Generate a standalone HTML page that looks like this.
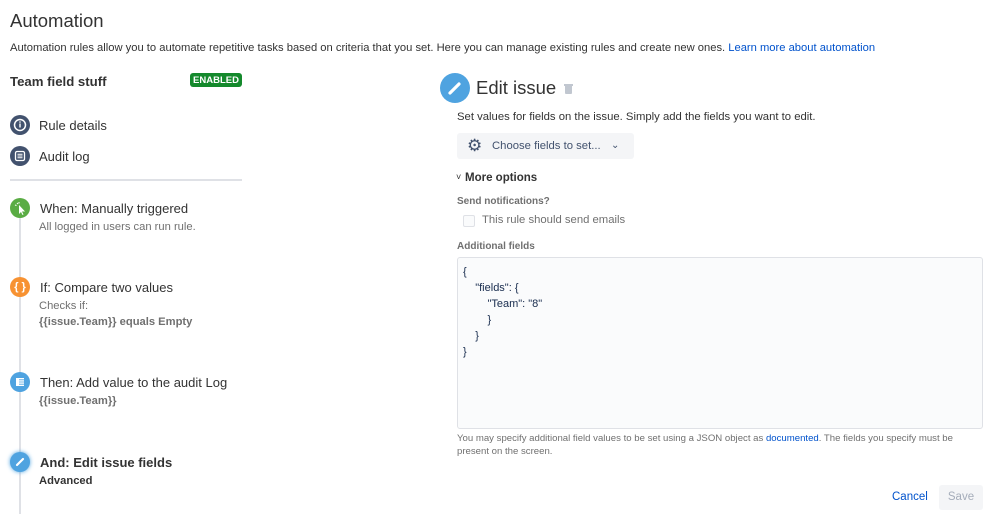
<!DOCTYPE html><html><head><style>
body{margin:0;width:998px;height:514px;overflow:hidden;background:#fff;font-family:"Liberation Sans",sans-serif;color:#333;position:relative}
div,span{position:absolute;white-space:nowrap}
.c{border-radius:50%;}
.t{font-size:13px;color:#333}
.s{font-size:11.2px;color:#707070}
.b{font-weight:bold}
</style></head><body>
<div style="left:10px;top:10px;font-size:18.5px;color:#333">Automation</div>
<div style="left:10px;top:42px;font-size:11.2px">Automation rules allow you to automate repetitive tasks based on criteria that you set. Here you can manage existing rules and create new ones. <span style="position:static;color:#0052cc">Learn more about automation</span></div>
<div style="left:10px;top:74px;font-size:13.2px;font-weight:bold">Team field stuff</div>
<div style="left:190px;top:73px;width:52px;height:14px;background:#14892c;border-radius:3px;color:#fff;font-size:9.5px;font-weight:bold;text-align:center;line-height:15px">ENABLED</div>
<div class="c" style="left:10px;top:115px;width:20px;height:20px;background:#42526e"><svg width="20" height="20"><circle cx="10" cy="10" r="5.5" fill="none" stroke="#fff" stroke-width="1.5"/><rect x="9.3" y="8.5" width="1.4" height="4" fill="#fff"/><circle cx="10" cy="7" r=".8" fill="#fff"/></svg></div>
<div class="t" style="left:39px;top:118px">Rule details</div>
<div class="c" style="left:10px;top:146px;width:20px;height:20px;background:#42526e"><svg width="20" height="20"><rect x="5.5" y="5.5" width="9" height="9" rx="1.5" fill="none" stroke="#fff" stroke-width="1.3"/><path d="M7.5 8.2h5M7.5 10h5M7.5 11.8h5" stroke="#fff"/></svg></div>
<div class="t" style="left:39px;top:149px">Audit log</div>
<div style="left:10px;top:179px;width:232px;height:2px;background:#dfe1e6"></div>
<div style="left:19px;top:210px;width:2px;height:304px;background:#dfe1e6"></div>
<div class="c" style="left:10px;top:198px;width:20px;height:20px;background:#5aac44"><svg width="20" height="20"><path d="M9 7l0 9 2-2 1.5 3 1-.5-1.5-3h3z" fill="#fff"/><path d="M7 5l1 1M9 4v1.5M5 7l1.5 .5" stroke="#fff"/></svg></div>
<div class="t" style="left:40px;top:201px">When: Manually triggered</div>
<div class="s" style="left:39px;top:221px">All logged in users can run rule.</div>
<div class="c" style="left:10px;top:277px;width:20px;height:20px;background:#f79232;color:#fff;font-size:11px;font-weight:bold;text-align:center;line-height:20px">{ }</div>
<div class="t" style="left:40px;top:280px">If: Compare two values</div>
<div class="s" style="left:39px;top:300px">Checks if:</div>
<div class="s b" style="left:39px;top:316px">{{issue.Team}} equals Empty</div>
<div class="c" style="left:10px;top:372px;width:20px;height:20px;background:#4fa3e0"><svg width="20" height="20"><rect x="6" y="6" width="8" height="8" fill="#fff"/><path d="M9 7.8h5M9 10h5M9 12.2h5" stroke="#4fa3e0" stroke-width=".8"/></svg></div>
<div class="t" style="left:40px;top:375px">Then: Add value to the audit Log</div>
<div class="s b" style="left:39px;top:395px">{{issue.Team}}</div>
<div class="c" style="left:10px;top:452px;width:20px;height:20px;background:#4fa3e0;box-shadow:0 0 4px #4fa3e0"><svg width="20" height="20"><path d="M7 13l6-6" stroke="#fff" stroke-width="2.2" stroke-linecap="round"/></svg></div>
<div class="t b" style="left:40px;top:455px">And: Edit issue fields</div>
<div class="b" style="left:39px;top:475px;font-size:11.2px;color:#333">Advanced</div>

<div class="c" style="left:440px;top:73px;width:30px;height:30px;background:#4fa3e0"><svg width="30" height="30"><path d="M10 20l9-9" stroke="#fff" stroke-width="3.2" stroke-linecap="round"/></svg></div>
<div style="left:476px;top:77px;font-size:18.5px">Edit issue</div>
<div style="left:565px;top:86px;width:7px;height:8px;background:#c1c7d0;border-radius:0 0 1px 1px"></div>
<div style="left:564px;top:84px;width:9px;height:1.5px;background:#c1c7d0"></div>
<div style="left:457px;top:111px;font-size:11.3px">Set values for fields on the issue. Simply add the fields you want to edit.</div>
<div style="left:457px;top:133px;width:177px;height:26px;background:#f4f5f7;border-radius:3px"></div>
<div style="left:467px;top:138px;font-size:17px;color:#42526e;line-height:16px">⚙</div>
<div style="left:492px;top:140px;font-size:11.3px;color:#42526e">Choose fields to set...</div>
<div style="left:611px;top:140px;font-size:10px;color:#42526e">⌄</div>
<div style="left:456px;top:172px;font-size:9px">˅</div>
<div style="left:465px;top:172px;font-size:11.5px;font-weight:bold">More options</div>
<div style="left:457px;top:196px;font-size:10px;font-weight:bold;color:#707070">Send notifications?</div>
<div style="left:463px;top:215px;width:10px;height:10px;border:1px solid #dfe1e6;border-radius:2px;background:#fafbfc"></div>
<div style="left:482px;top:214px;font-size:11.3px;color:#707070">This rule should send emails</div>
<div style="left:457px;top:241px;font-size:10px;font-weight:bold;color:#707070">Additional fields</div>
<div style="left:457px;top:257px;width:524px;height:170px;border:1px solid #dfe1e6;background:#fafbfc;border-radius:3px"></div>
<div style="left:463px;top:264px;font-size:11px;line-height:16px;white-space:pre;color:#172b4d">{
    "fields": {
        "Team": "8"
        }
    }
}</div>
<div style="left:457px;top:432px;font-size:9.6px;line-height:13px;color:#707070;white-space:normal;width:505px">You may specify additional field values to be set using a JSON object as <span style="position:static;color:#0052cc">documented</span>. The fields you specify must be present on the screen.</div>
<div style="left:892px;top:491px;font-size:11.5px;color:#0052cc">Cancel</div>
<div style="left:939px;top:485px;width:44px;height:25px;background:#f4f5f7;border-radius:3px;color:#a5adba;font-size:11.5px;text-align:center;line-height:25px">Save</div>
</body></html>
